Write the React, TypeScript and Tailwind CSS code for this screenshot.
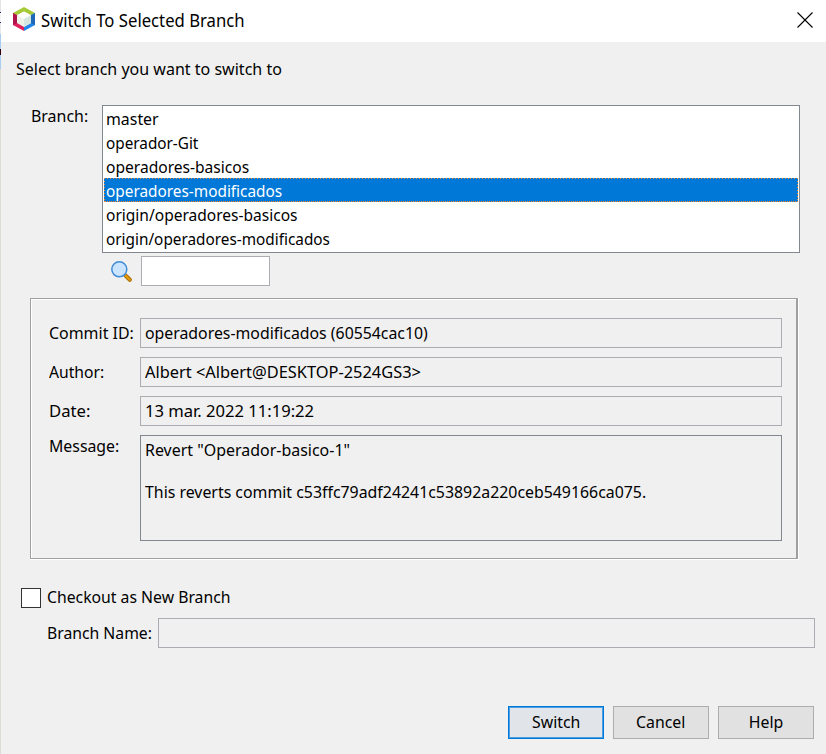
import type { ReactNode } from "react";

const branches = [
  { name: "master", width: "scale-x-[0.963]" },
  { name: "operador-Git", width: "scale-x-[0.927]" },
  { name: "operadores-basicos", width: "scale-x-[0.944]" },
  { name: "operadores-modificados", width: "scale-x-[0.931]" },
  { name: "origin/operadores-basicos", width: "scale-x-[0.941]" },
  { name: "origin/operadores-modificados", width: "scale-x-[0.929]" },
];

const selectedBranch = "operadores-modificados";

function Text({ width, children }: { width: string; children: ReactNode }) {
  return <span className={`inline-block origin-left ${width}`}>{children}</span>;
}

function AppIcon() {
  return (
    <svg width="22" height="24" viewBox="0 0 22 24" className="block">
      <path d="M11 0 22 6 11 12 0 6Z" fill="#a6ca35" />
      <path d="M0 6 11 12V24L0 18Z" fill="#e0205c" />
      <path d="M22 6 11 12V24L22 18Z" fill="#2385e8" />
      <path d="M0 6 4 8.200V16L0 18Z" fill="#b0124c" />
      <path d="M18 8.200 22 6v12l-4-2Z" fill="#1f68b8" />
      <path d="M11 4.500 18 8.200V16l-7 4-7-4V8.200Z" fill="#eef3ea" />
      <path d="M11 4.500 18 8.200 11 12 4 8.200Z" fill="#fff" />
      <path d="M18 8.200V16l-7 4v-8Z" fill="#d5e5df" />
    </svg>
  );
}

function SearchIcon() {
  return (
    <svg width="22" height="22" viewBox="0 0 22 22" className="block">
      <path d="m14.500 14.500 4.300 4.300" stroke="#a96f08" strokeWidth="4.200" strokeLinecap="round" />
      <path d="m14.500 14.500 4.300 4.300" stroke="#e89b0b" strokeWidth="2" strokeLinecap="round" />
      <circle cx="8.300" cy="8.300" r="7.500" fill="#cae3ff" stroke="#408bd5" strokeWidth="1.500" />
    </svg>
  );
}

function Field({ label, labelWidth, width, children }: { label: string; labelWidth: string; width: string; children: ReactNode }) {
  return (
    <div className="flex h-[30px]">
      <div className="w-[91px] leading-[30px]"><Text width={labelWidth}>{label}</Text></div>
      <div className="flex-1 border border-[#abadb3] pl-1 leading-7"><Text width={width}>{children}</Text></div>
    </div>
  );
}

function Button({ children, primary = false }: { children: ReactNode; primary?: boolean }) {
  return (
    <button
      className={`h-[33px] w-24 border pb-0.5 leading-[29px] ${
        primary ? "border-[#0078d7] bg-[#e1e5e9] inset-ring inset-ring-[#4a9fe4]" : "border-[#adadad] bg-[#e1e1e1]"
      }`}
    >
      <span className="inline-block scale-x-[0.96]">{children}</span>
    </button>
  );
}

export default function App() {
  return (
    <div className="flex h-[754px] w-[826px] overflow-hidden bg-[#f0f0f0] font-['Noto_Sans',sans-serif] text-[16.5px] whitespace-nowrap text-black">
      <div className="flex w-px flex-col bg-[#dcdcd4]">
        <div className="h-3 bg-[#e4e4e4]" />
        <div className="h-px bg-[#202060]" />
        <div className="h-[9px] bg-[#f4f4f4]" />
        <div className="h-px bg-[#202060]" />
        <div className="h-[11px] bg-[#e8e8e8]" />
        <div className="h-[15px] bg-[#a9cdf0]" />
        <div className="h-[6px] bg-[#300008]" />
        <div className="h-[14px] bg-[#a9cdf0]" />
      </div>
      <div className="flex w-[825px] flex-col">
        <header className="flex h-[42px] items-start bg-white pl-3">
          <div className="pt-[7px]"><AppIcon /></div>
          <h1 className="ml-[6px] text-[18px] leading-10 font-normal"><Text width="scale-x-[0.927]">Switch To Selected Branch</Text></h1>
          <svg width="16" height="16" viewBox="0 0 16 16" className="mt-3 mr-[13px] ml-auto">
            <path d="m.5.5 15 15m0-15-15 15" stroke="#000" strokeWidth="1.100" />
          </svg>
        </header>

        <main className="flex flex-col">
          <p className="mt-[15px] ml-[15px] h-6 leading-6"><Text width="scale-x-[0.971]">Select branch you want to switch to</Text></p>

          <section className="mt-6 flex pl-[29px]">
            <div className="w-[72px] pl-px leading-[22px]"><Text width="scale-x-[0.966]">Branch:</Text></div>
            <ul className="h-[148px] w-[698px] border border-[#828790] bg-white px-px">
              {branches.map((b) => (
                b.name === selectedBranch ? (
                  <li
                    key={b.name}
                    className="h-6 border-b border-dotted border-[#ff8728] bg-[conic-gradient(at_1px_1px,#0078d7_270deg,#ff8728_0)] bg-size-[3px_3px] px-px pt-px text-white"
                  >
                    <div className="h-[22px] bg-[#0078d7] pl-px leading-6"><Text width={b.width}>{b.name}</Text></div>
                  </li>
                ) : (
                  <li key={b.name} className="h-6 pl-0.5 leading-[26px]"><Text width={b.width}>{b.name}</Text></li>
                )
              ))}
            </ul>
          </section>

          <div className="mt-[3px] flex h-[30px] pl-[110px]">
            <div className="w-[30px] pt-[5px]"><SearchIcon /></div>
            <div className="w-[129px] border border-[#abadb3] bg-white" />
          </div>

          <section className="mt-3 ml-[29px] h-[262px] w-[769px] border-r border-b border-white">
            <div className="h-[261px] border border-r-2 border-[#a0a0a0]">
              <div className="flex h-[259px] flex-col gap-[9px] border-t border-l border-white pt-[18px] pr-[14px] pl-[17px]">
                <Field label="Commit ID:" labelWidth="scale-x-[0.966]" width="scale-x-[0.96]">operadores-modificados (60554cac10)</Field>
                <Field label="Author:" labelWidth="scale-x-[0.95]" width="scale-x-[0.993]">Albert &lt;Albert@DESKTOP-2524GS3&gt;</Field>
                <Field label="Date:" labelWidth="scale-x-[1.01]" width="scale-x-[1.005]">13 mar. 2022 11:19:22</Field>
                <div className="flex h-[106px]">
                  <div className="w-[91px] leading-[22px]"><Text width="scale-x-[0.96]">Message:</Text></div>
                  <div className="flex-1 border border-[#828790] pt-[3px] pl-1 leading-[21px]">
                    <p className="h-[42px]"><Text width="scale-x-[0.967]">Revert "Operador-basico-1"</Text></p>
                    <p><Text width="scale-x-[0.962]">This reverts commit c53ffc79adf24241c53892a220ceb549166ca075.</Text></p>
                  </div>
                </div>
              </div>
            </div>
          </section>

          <div className="mt-7 flex h-5 pl-5">
            <div className="size-5 border border-[#333] bg-white" />
            <div className="ml-[6px] leading-[18px]"><Text width="scale-x-[0.955]">Checkout as New Branch</Text></div>
          </div>
          <div className="mt-[10px] flex h-[30px] pl-[46px]">
            <div className="w-[111px] leading-[30px]"><Text width="scale-x-[0.954]">Branch Name:</Text></div>
            <div className="w-[657px] border border-[#abadb3]" />
          </div>

          <footer className="mt-[58px] flex justify-end gap-[9px] pr-3">
            <Button primary>Switch</Button>
            <Button>Cancel</Button>
            <Button>Help</Button>
          </footer>
        </main>
      </div>
    </div>
  );
}
